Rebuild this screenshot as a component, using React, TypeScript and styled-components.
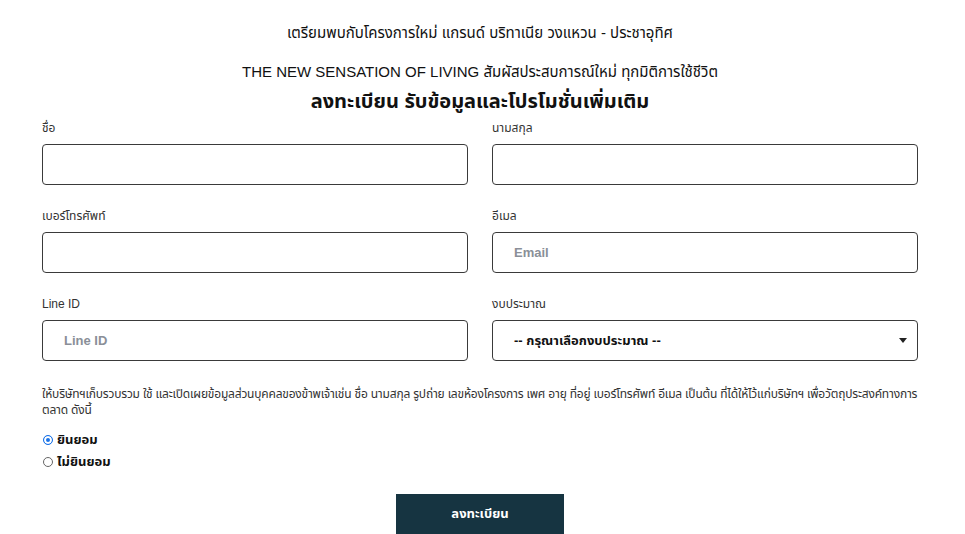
import React from "react";
import styled, { createGlobalStyle } from "styled-components";

const GlobalStyle = createGlobalStyle`
  html, body {
    margin: 0;
    padding: 0;
    background: #ffffff;
  }
  body {
    font-family: "Liberation Sans", "Noto Sans Thai", "Noto Sans", sans-serif;
    color: #222;
  }
`;

const Page = styled.div`
  width: 876px;
  margin: 0 0 0 42px;
  padding-top: 22px;
`;

const Heading = styled.div`
  text-align: center;
  margin-bottom: 6px;
`;

const SubTitle = styled.p<{ $gap?: number }>`
  margin: 0 0 ${(p) => p.$gap ?? 0}px;
  font-size: 15px;
  line-height: 22px;
  color: #111;
`;

const Title = styled.h2`
  margin: 0;
  font-size: 20px;
  line-height: 26px;
  font-weight: 700;
  color: #111;
`;

const FieldGrid = styled.div`
  display: grid;
  grid-template-columns: 1fr 1fr;
  column-gap: 24px;
  row-gap: 23px;
`;

const Field = styled.div`
  display: flex;
  flex-direction: column;
  gap: 8px;
`;

const Label = styled.label`
  font-size: 12px;
  line-height: 16px;
  color: #333;
`;

const TextInput = styled.input`
  box-sizing: border-box;
  height: 41px;
  width: 100%;
  border: 1px solid #3a3a3a;
  border-radius: 4px;
  padding: 0 21px;
  font-family: inherit;
  font-size: 13px;
  font-weight: 700;
  color: #222;
  outline: none;
  &::placeholder {
    color: #8a8f98;
  }
`;

const SelectBox = styled.div`
  box-sizing: border-box;
  height: 41px;
  border: 1px solid #3a3a3a;
  border-radius: 4px;
  padding: 0 10px 0 21px;
  display: flex;
  align-items: center;
  justify-content: space-between;
  font-size: 13px;
  font-weight: 700;
  color: #111;
`;

const Caret = styled.span`
  width: 0;
  height: 0;
  border-left: 4px solid transparent;
  border-right: 4px solid transparent;
  border-top: 5px solid #222;
`;

const Consent = styled.p`
  margin: 25px 0 13px;
  font-size: 12px;
  line-height: 16px;
  letter-spacing: -0.2px;
  color: #333;
`;

const RadioList = styled.div`
  display: flex;
  flex-direction: column;
  gap: 4px;
`;

const RadioRow = styled.label`
  display: flex;
  align-items: center;
  gap: 4px;
  font-size: 13px;
  line-height: 18px;
  font-weight: 700;
  color: #111;
`;

const RadioDot = styled.span<{ $checked?: boolean }>`
  box-sizing: border-box;
  width: 10px;
  height: 10px;
  margin-left: 1px;
  border-radius: 50%;
  border: 1px solid ${(p) => (p.$checked ? "#1a73e8" : "#666")};
  background: ${(p) => (p.$checked ? "#1a73e8" : "#fff")};
  box-shadow: ${(p) => (p.$checked ? "inset 0 0 0 2px #fff" : "none")};
`;

const Actions = styled.div`
  display: flex;
  justify-content: center;
  margin-top: 23px;
`;

const Submit = styled.button`
  width: 168px;
  height: 40px;
  border: none;
  background: #163441;
  color: #fff;
  font-family: inherit;
  font-size: 13px;
  font-weight: 700;
`;

export default function App() {
  return (
    <>
      <GlobalStyle />
      <Page>
        <Heading>
          <SubTitle $gap={17}>
            เตรียมพบกับโครงการใหม่ แกรนด์ บริทาเนีย วงแหวน - ประชาอุทิศ
          </SubTitle>
          <SubTitle $gap={5}>
            THE NEW SENSATION OF LIVING สัมผัสประสบการณ์ใหม่ ทุกมิติการใช้ชีวิต
          </SubTitle>
          <Title>ลงทะเบียน รับข้อมูลและโปรโมชั่นเพิ่มเติม</Title>
        </Heading>
        <FieldGrid>
          <Field>
            <Label>ชื่อ</Label>
            <TextInput />
          </Field>
          <Field>
            <Label>นามสกุล</Label>
            <TextInput />
          </Field>
          <Field>
            <Label>เบอร์โทรศัพท์</Label>
            <TextInput />
          </Field>
          <Field>
            <Label>อีเมล</Label>
            <TextInput placeholder="Email" />
          </Field>
          <Field>
            <Label>Line ID</Label>
            <TextInput placeholder="Line ID" />
          </Field>
          <Field>
            <Label>งบประมาณ</Label>
            <SelectBox>
              <span>-- กรุณาเลือกงบประมาณ --</span>
              <Caret />
            </SelectBox>
          </Field>
        </FieldGrid>
        <Consent>
          ให้บริษัทฯเก็บรวบรวม ใช้ และเปิดเผยข้อมูลส่วนบุคคลของข้าพเจ้าเช่น ชื่อ นามสกุล รูปถ่าย
          เลขห้องโครงการ เพศ อายุ ที่อยู่ เบอร์โทรศัพท์ อีเมล เป็นต้น ที่ได้ให้ไว้แก่บริษัทฯ
          เพื่อวัตถุประสงค์ทางการตลาด ดังนี้
        </Consent>
        <RadioList>
          <RadioRow>
            <RadioDot $checked />
            ยินยอม
          </RadioRow>
          <RadioRow>
            <RadioDot />
            ไม่ยินยอม
          </RadioRow>
        </RadioList>
        <Actions>
          <Submit>ลงทะเบียน</Submit>
        </Actions>
      </Page>
    </>
  );
}
